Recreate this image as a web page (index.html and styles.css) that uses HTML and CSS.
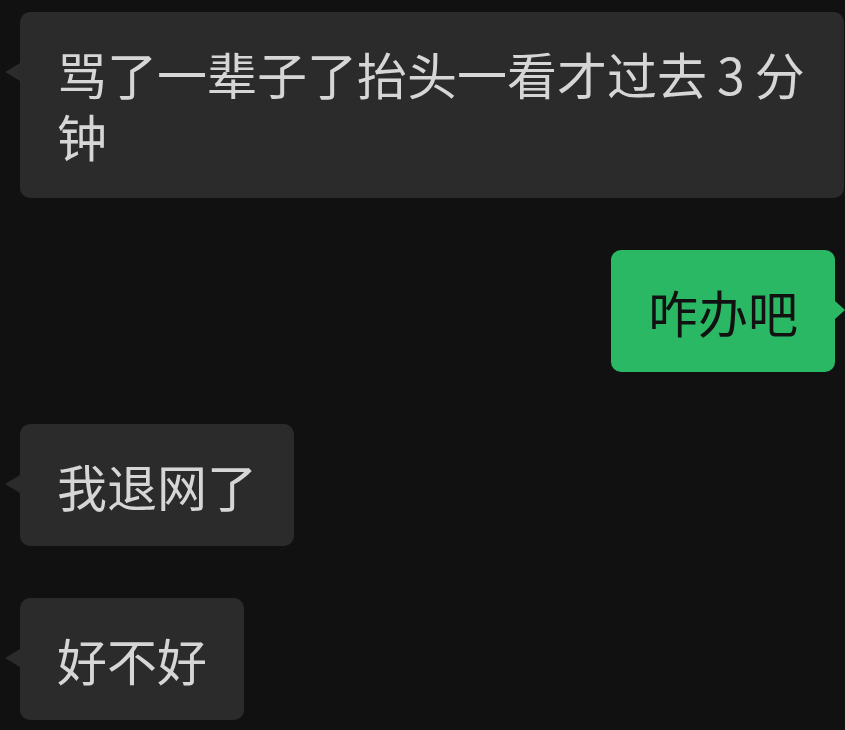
FILE: index.html
```html
<!DOCTYPE html>
<html lang="zh-CN">
<head>
    <meta charset="UTF-8">
    <meta name="viewport" content="width=device-width, initial-scale=1.0">
    <title>聊天</title>
    <link rel="stylesheet" href="styles.css">
</head>
<body>
    <div class="chat">
        <div class="msg left">
            <div class="bubble long">骂了一辈子了抬头一看才过去<span class="num">3</span>分钟</div>
        </div>
        <div class="msg right">
            <div class="bubble">咋办吧</div>
        </div>
        <div class="msg left">
            <div class="bubble">我退网了</div>
        </div>
        <div class="msg left">
            <div class="bubble">好不好</div>
        </div>
    </div>
</body>
</html>
```

FILE: styles.css
```css
/* Dark chat window */
body {
    margin: 0;
    background-color: #111111;
    font-family: "Noto Sans CJK SC", "Noto Sans", sans-serif;
}

.chat {
    display: flex;
    flex-direction: column;
    gap: 52px;
    padding: 12px 1px 0 20px;
}

.msg {
    display: flex;
}

.msg.right {
    justify-content: flex-end;
    padding-right: 9px;
}

.bubble {
    position: relative;
    max-width: 750px;
    padding: 30px 37px;
    border-radius: 10px;
    font-size: 50px;
    line-height: 62px;
    background-color: #2b2b2b;
    color: #d6d6d6;
}

.bubble.long {
    padding-bottom: 32px;
}

.num {
    margin: 0 0.2em;
}

/* little arrow next to the first line */
.bubble::before {
    content: "";
    position: absolute;
    top: 51px;
    border-top: 9px solid transparent;
    border-bottom: 9px solid transparent;
}

.left .bubble::before {
    left: -15px;
    border-right: 15px solid #2b2b2b;
}

.right .bubble {
    background-color: #2bb864;
    color: #111111;
}

.right .bubble::before {
    right: -10px;
    border-left: 10px solid #2bb864;
}
```
